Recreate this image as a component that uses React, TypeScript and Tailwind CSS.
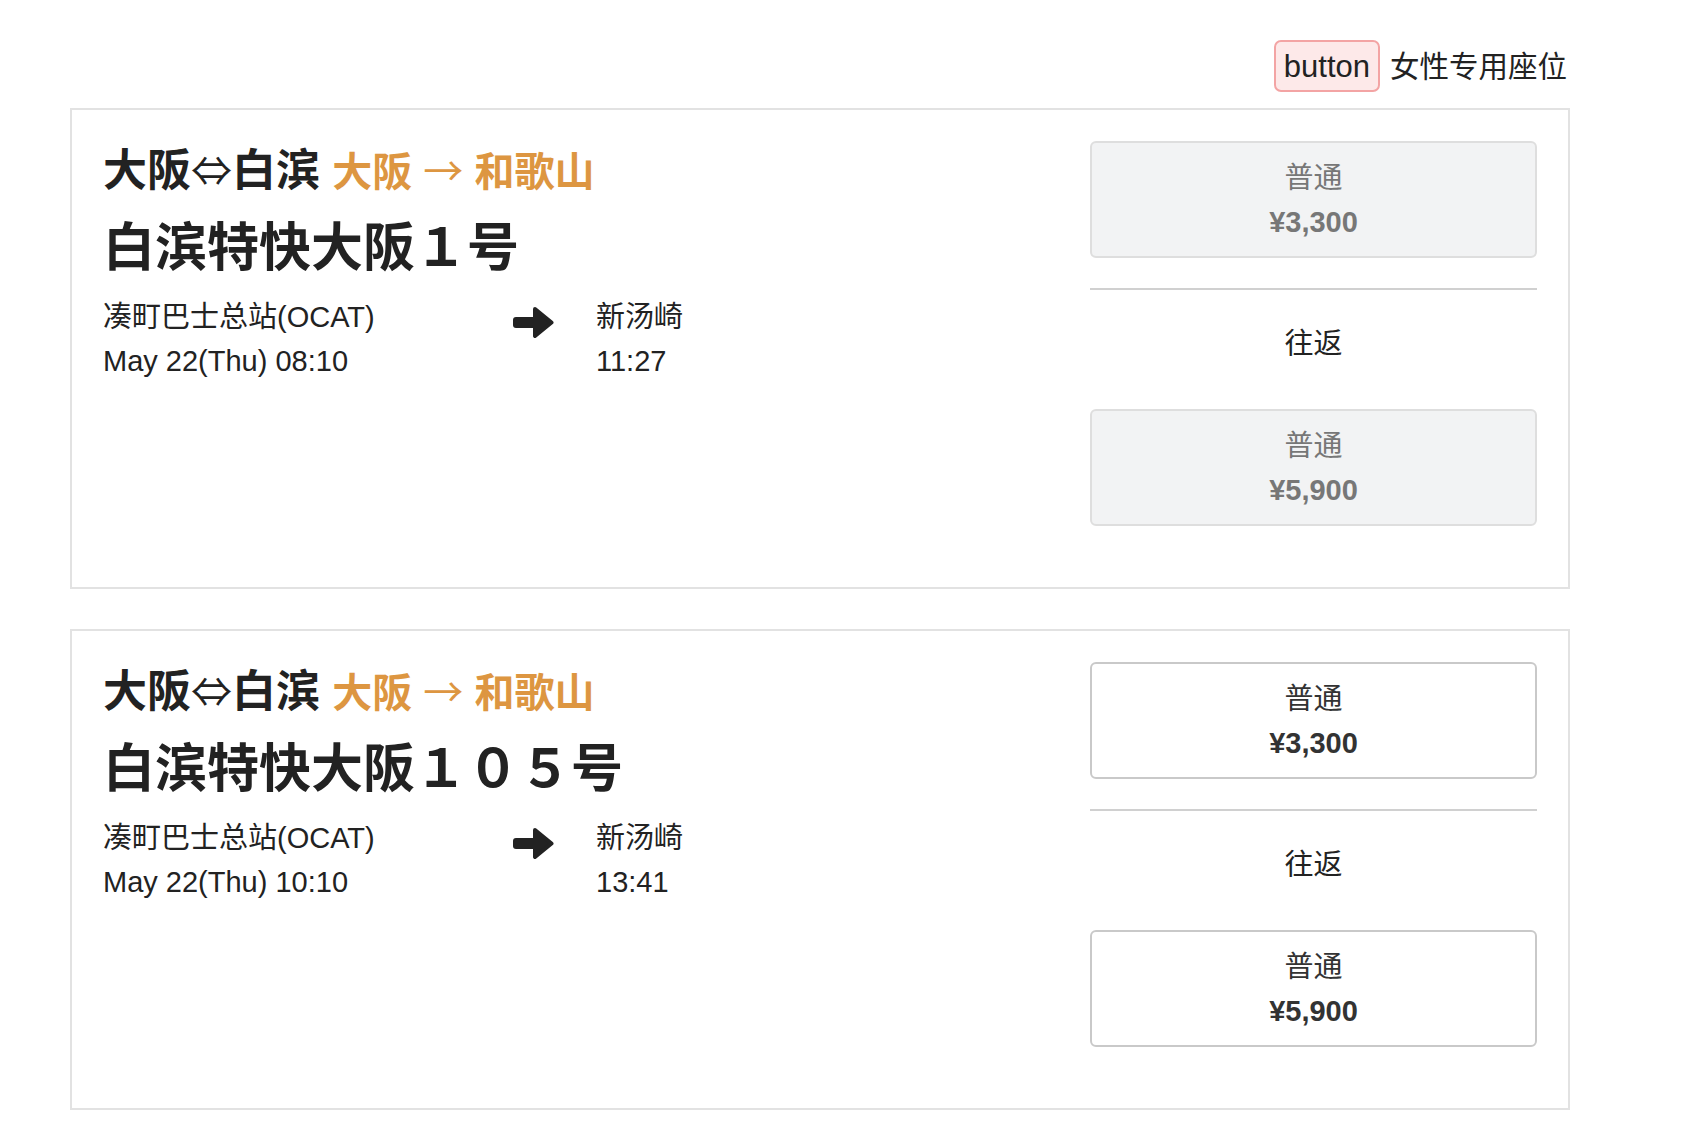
import React from "react";

const Arrow = () => (
  <svg width="41" height="33" viewBox="0 0 41 33">
    <rect x="0" y="11" width="24" height="11" rx="3" fill="#222" />
    <path d="M22 3 L38.5 16.5 L22 30 Z" fill="#222" stroke="#222" strokeWidth="4" strokeLinejoin="round" />
  </svg>
);

function Fare({ price, disabled }: { price: string; disabled: boolean }) {
  return (
    <button
      className={
        disabled
          ? "w-full h-[117px] flex flex-col items-center justify-center border-2 rounded-[6px] bg-[#f2f3f4] border-[#dedede] text-[#777]"
          : "w-full h-[117px] flex flex-col items-center justify-center border-2 rounded-[6px] bg-white border-[#c9c9c9] text-[#333]"
      }
    >
      <div className="leading-[44px] text-[29px]">普通</div>
      <div className="leading-[44px] text-[29px] font-bold">{price}</div>
    </button>
  );
}

function Card({ title, dep, arr, disabled }: { title: string; dep: string; arr: string; disabled: boolean }) {
  return (
    <div className="border-2 border-[#e2e2e2] pt-[31px] px-[31px] pb-[61px] flex">
      <div className="flex-1 text-[#222] pt-[2px]">
        <div className="h-[58px] leading-[50px] text-[44px] font-bold whitespace-nowrap overflow-visible">
          大阪<span className="text-[41px] font-normal font-['Noto_Sans_CJK_SC',sans-serif]">⇔</span>白滨{" "}
          <span className="text-[40px] text-[#dd9641]">
            大阪 <span className="font-normal font-['Noto_Sans_CJK_SC',sans-serif]">→</span> 和歌山
          </span>
        </div>
        <div className="h-[94px] leading-[94px] text-[52px] font-bold whitespace-nowrap">{title}</div>
        <div className="flex text-[29px] leading-[44px]">
          <div className="w-[410px]">
            <div>凑町巴士总站(OCAT)</div>
            <div>May 22(Thu) {dep}</div>
          </div>
          <div className="w-[83px] pt-[11px]">
            <Arrow />
          </div>
          <div>
            <div>新汤崎</div>
            <div>{arr}</div>
          </div>
        </div>
      </div>
      <div className="w-[447px]">
        <Fare price="¥3,300" disabled={disabled} />
        <div className="mt-[30px] h-[2px] bg-[#d0d0d0]" />
        <div className="pt-[32px] pb-[42px] text-center text-[29px] leading-[45px] text-[#222]">往返</div>
        <Fare price="¥5,900" disabled={disabled} />
      </div>
    </div>
  );
}

export default function App() {
  return (
    <div className="min-h-[1138px] bg-white font-['Liberation_Sans','Noto_Sans_CJK_SC',sans-serif]">
      <div className="ml-[70px] w-[1500px] pt-[40px]">
        <div className="flex justify-end items-center pr-[3px] mb-[16px] text-[#222]">
          <button className="h-[52px] px-[8px] border-2 border-[#f3a4a4] bg-[#fde9e9] rounded-[7px] text-[31px] leading-none text-[#222]">
            button
          </button>
          <span className="ml-[10px] mt-[2px] text-[29.5px]">女性专用座位</span>
        </div>
        <Card title="白滨特快大阪１号" dep="08:10" arr="11:27" disabled={true} />
        <div className="h-[40px]" />
        <Card title="白滨特快大阪１０５号" dep="10:10" arr="13:41" disabled={false} />
      </div>
    </div>
  );
}
